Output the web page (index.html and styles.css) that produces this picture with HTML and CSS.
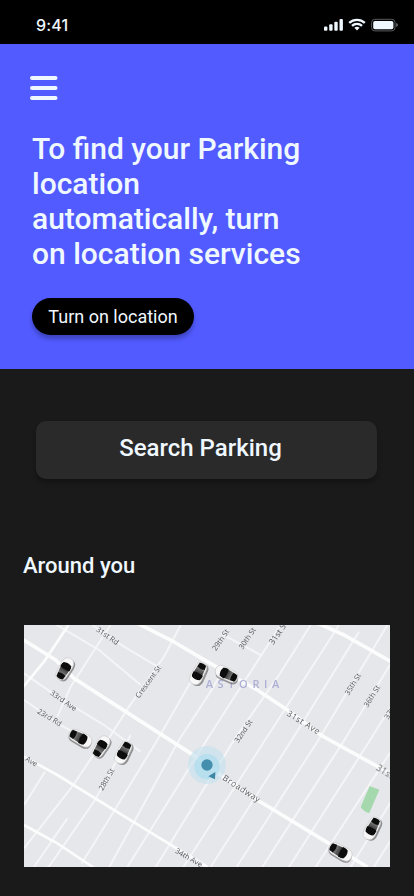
FILE: index.html
```html
<!DOCTYPE html>
<html lang="en">
<head>
<meta charset="utf-8">
<meta name="viewport" content="width=device-width, initial-scale=1">
<title>Parking</title>
<link rel="stylesheet" href="styles.css">
</head>
<body>
<div class="status">
  <span class="time">9:41</span>
  <svg class="status-icons" width="74" height="14" viewBox="0 0 74 14">
    <g fill="#f0f8ff">
      <rect x="0" y="8.4" width="3.4" height="4.3" rx="1"/>
      <rect x="5.2" y="6.2" width="3.4" height="6.5" rx="1"/>
      <rect x="10.3" y="3.7" width="3.4" height="9" rx="1"/>
      <rect x="15.5" y="1" width="3.4" height="11.7" rx="1"/>
    </g>
    <g fill="none" stroke="#f0f8ff" stroke-width="2.3">
      <path d="M25.2 4.9A11.3 11.3 0 0 1 40.8 4.9"/>
      <path d="M28 7.9A7.2 7.2 0 0 1 38 7.9"/>
    </g>
    <path d="M30.4 9.8A4 4 0 0 1 35.6 9.8L33 12.5Z" fill="#f0f8ff"/>
    <rect x="47.6" y="1.3" width="23.4" height="11.6" rx="3.2" fill="none" stroke="#595b5e"/>
    <rect x="49.2" y="2.9" width="20.2" height="8.4" rx="1.8" fill="#f0f8ff"/>
    <path d="M72.2 5.1Q74 5.8 74 7T72.2 8.9Z" fill="#6b6e70"/>
  </svg>
</div>
<header class="hero">
  <svg class="menu" width="28" height="24" viewBox="0 0 28 24" fill="#f0f8ff">
    <rect width="27.5" height="4" rx="2"/><rect y="10" width="27.5" height="4" rx="2"/><rect y="20" width="27.5" height="4" rx="2"/>
  </svg>
  <h1>To find your Parking<br>location<br>automatically, turn<br>on location services</h1>
  <button class="pill">Turn on location</button>
</header>
<main>
  <button class="search">Search Parking</button>
  <h2>Around you</h2>
  <svg class="map" width="366" height="242" viewBox="0 0 1098 726">
    <defs>
      <linearGradient id="roof" x1="0" y1="1" x2="0" y2="0"><stop offset="0" stop-color="#000"/><stop offset=".4" stop-color="#333"/><stop offset="1" stop-color="#8d8d8d"/></linearGradient>
      <filter id="soft" x="0" y="0" width="100%" height="100%"><feGaussianBlur stdDeviation="1.5"/></filter>
      <g id="car">
        <path d="M-20-24Q-18-42 0-42T20-24L22 18Q21 42 0 43T-22 18Z" fill="#f7f7f7" stroke="#c4c4c4" stroke-width="2"/>
        <path d="M-15-22Q0-29 15-22L18 14Q0 28-18 14Z" fill="url(#roof)"/>
        <path d="M-19 2Q0-5 19 2L16 20Q0 28-16 20Z" fill="#080808"/>
        <path d="M-13-36Q0-42 13-36L15-21Q0-15-15-21Z" fill="#111"/>
      </g>
      <path id="car-shade" d="M-20-24Q-18-42 0-42T20-24L22 18Q21 42 0 43T-22 18Z" fill="#555" opacity=".6"/>
    </defs>
    <rect width="1098" height="726" fill="#e6e7eb"/>
    <g filter="url(#soft)">
      <g class="streets">
        <path d="M0 540L63 440M0 670L148 480L235 350M-20 820L78 720L213 525L320 330"/>
        <path d="M173 715L263 570L400 345L498 175L540 105M248 740L465 345L563 195L595 140"/>
        <path d="M310 726L545 350L638 205L690 125L770 0M395 726L627 350L720 215L765 150L860 0"/>
        <path d="M478 726L720 350L945 0M560 726L800 350L1005 20M638 726L880 350L1090 0M715 726L958 350L1110 100"/>
        <path d="M795 726L1035 350L1110 230M875 726L1120 350M1050 726L1110 630M980 726L1110 515"/>
        <path d="M100 275L140 185L240 30L260 0M248 350L315 245L420 95L470 0M30 726L130 580"/>
        <path d="M90-5L225 75L350 180M205 0L300 65L410 130M590 25L710 90M0 145L100 215L240 300L350 380"/>
        <path d="M0 225L110 300L180 340"/>
      </g>
      <g class="avenues">
        <path d="M-20 33L95 105L150 160L290 250L500 385L590 450L700 525L890 640L1030 726"/>
        <path d="M300-25L440 45L550 110L700 195L800 262L890 330L1098 445M860-15L960 30L1110 115"/>
        <path class="medium" d="M0 395L100 450L270 555L400 635L550 726M0 600L100 655L220 735M-10 195L60 110L140-10"/>
      </g>
      <path d="M1037 483L1066 494L1036 564Q1018 560 1010 546Z" fill="#a5d9ad"/>
      <circle cx="549" cy="420" r="57" fill="#c3e1ec" opacity=".6"/>
      <circle cx="549" cy="425" r="38" fill="#a9dbee" opacity=".65"/>
      <circle cx="549" cy="420" r="17" fill="#458fae"/>
      <path d="M553 454L574 441L573 463Z" fill="#3e86a3"/>
      <g class="labels">
        <text transform="translate(215 17) rotate(35)">31st Rd</text>
        <text transform="translate(77 207) rotate(35)">33rd Ave</text>
        <text transform="translate(38 263) rotate(31)">23rd Rd</text>
        <text transform="translate(3 406) rotate(31)">Ave</text>
        <text transform="translate(345 221) rotate(-54)">Crescent St</text>
        <text transform="translate(576 79) rotate(-56)">29th St</text>
        <text transform="translate(656 74) rotate(-56)">30th St</text>
        <text class="major" transform="translate(748 61) rotate(-56)">31st St</text>
        <text transform="translate(643 355) rotate(-56)">32nd St</text>
        <text transform="translate(974 212) rotate(-58)">35th St</text>
        <text transform="translate(1031 248) rotate(-58)">36th St</text>
        <text transform="translate(1093 284) rotate(-58)">37th St</text>
        <text transform="translate(236 498) rotate(-60)">28th St</text>
        <text transform="translate(452 682) rotate(30)">34th Ave</text>
        <text class="major" transform="translate(787 270) rotate(32)" textLength="110">31st Ave</text>
        <text class="major" transform="translate(1055 434) rotate(32)" textLength="110">31st Ave</text>
        <text class="major" transform="translate(594 463) rotate(33)" textLength="128">Broadway</text>
      </g>
      <text class="district" x="545" y="190" textLength="232">ASTORIA</text>
      <g>
        <use href="#car-shade" transform="translate(126 136) rotate(210) scale(.84)"/>
        <use href="#car" transform="translate(122 132) rotate(210) scale(.84)"/>
        <use href="#car-shade" transform="translate(528 149) rotate(27) scale(.84)"/>
        <use href="#car" transform="translate(523 145) rotate(27) scale(.84)"/>
        <use href="#car-shade" transform="translate(609 153) rotate(116) scale(.84)"/>
        <use href="#car" transform="translate(608 147) rotate(116) scale(.84)"/>
        <use href="#car-shade" transform="translate(168 344) rotate(-62) scale(.86)"/>
        <use href="#car" transform="translate(169 339) rotate(-62) scale(.86)"/>
        <use href="#car-shade" transform="translate(235 369) rotate(212) scale(.82)"/>
        <use href="#car" transform="translate(231 365) rotate(212) scale(.82)"/>
        <use href="#car-shade" transform="translate(303 386) rotate(28) scale(.84)"/>
        <use href="#car" transform="translate(298 382) rotate(28) scale(.84)"/>
        <use href="#car-shade" transform="translate(1049 613) rotate(28) scale(.84)"/>
        <use href="#car" transform="translate(1044 610) rotate(28) scale(.84)"/>
        <use href="#car-shade" transform="translate(948 685) rotate(-61) scale(.88)"/>
        <use href="#car" transform="translate(949 680) rotate(-61) scale(.88)"/>
      </g>
    </g>
  </svg>
</main>
</body>
</html>
```
FILE: styles.css
```css
* { box-sizing: border-box; }
body {
  margin: 0;
  height: 896px;
  overflow: hidden;
  background: #1a1a1a;
  color: #f0f8ff;
  font-family: Roboto, sans-serif;
}
h1, h2 { margin: 0; font-weight: 500; }
button { display: block; border: 0; color: inherit; font-family: inherit; }
svg { display: block; }
.status {
  height: 44px;
  padding: 6px 16px 0 36px;
  display: flex;
  align-items: center;
  justify-content: space-between;
  background: #000;
}
.time { font: 500 16px/20px Inter, sans-serif; letter-spacing: .2px; }
.hero {
  height: 325px;
  padding: 32px 30px 0;
  background: #525bff;
}
.hero h1 {
  margin: 31px 0 0 2px;
  font-size: 30px;
  line-height: 35px;
}
.pill {
  margin: 27px 0 0 2px;
  width: 162px;
  height: 37px;
  padding: 0;
  border-radius: 19px;
  background: #000;
  font-size: 18px;
  box-shadow: 0 4px 4px rgba(0, 0, 0, .25);
}
main { padding: 52px 24px 0; }
.search {
  margin-left: 12px;
  width: 341px;
  height: 58px;
  padding: 0 12px 4px 0;
  border-radius: 10px;
  background: #2a2a2a;
  font-size: 24px;
  font-weight: 500;
  box-shadow: 0 4px 4px rgba(0, 0, 0, .25);
}
main h2 {
  margin: 73px 0 46px -1px;
  font-size: 22px;
  line-height: 27px;
}
.streets, .avenues { fill: none; stroke: #f5f5f8; stroke-width: 6; }
.avenues { stroke: #fcfcfd; stroke-width: 11; }
.avenues .medium { stroke-width: 8; }
.labels { font: 22px "Open Sans", sans-serif; fill: #55585c; }
.labels .major { font-size: 25px; }
.district { font: 600 33px "Open Sans", sans-serif; letter-spacing: 11px; fill: #aeb0d4; }
```
